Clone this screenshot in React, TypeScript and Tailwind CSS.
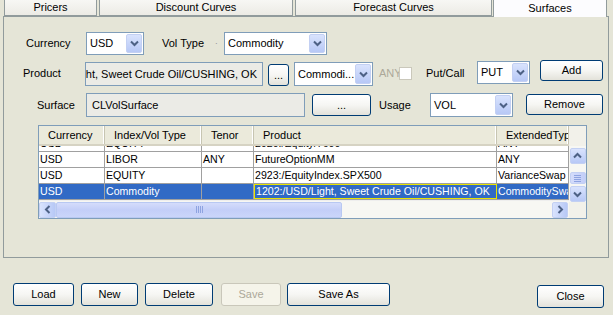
import React from "react";

const Chevron = ({ dir = "down" }: { dir?: "down" | "up" | "left" | "right" }) => {
  const rot = { down: 0, up: 180, left: 90, right: -90 }[dir];
  return (
    <svg width="9" height="7" viewBox="0 0 9 7" style={{ transform: `rotate(${rot}deg)` }}>
      <path d="M1 1.5 L4.5 5 L8 1.5" fill="none" stroke="#4d6185" strokeWidth="2" />
    </svg>
  );
};

function DropBtn() {
  return (
    <div className="w-[16px] self-stretch m-[1px] rounded-[2px] border border-[#c3d0f3] bg-gradient-to-b from-[#d9e3fd] to-[#b7c8f6] flex items-center justify-center">
      <Chevron />
    </div>
  );
}

function Combo({ className, text }: { className: string; text: string }) {
  return (
    <div className={`flex border border-[#7f9db9] bg-white shrink-0 ${className}`}>
      <div className="flex-1 flex items-center pl-[3px] whitespace-nowrap overflow-hidden">{text}</div>
      <DropBtn />
    </div>
  );
}

function XPButton({
  className,
  children,
  disabled,
}: {
  className: string;
  children: React.ReactNode;
  disabled?: boolean;
}) {
  return (
    <div
      className={`shrink-0 flex items-center justify-center rounded-[3px] border ${
        disabled
          ? "border-[#c9c7ba] text-[#aca899] bg-[#f5f4ea]"
          : "border-[#003c74] bg-gradient-to-b from-[#ffffff] via-[#f6f6f3] to-[#e3e2da]"
      } ${className}`}
    >
      {children}
    </div>
  );
}

function Tab({ className, label, active }: { className: string; label: string; active?: boolean }) {
  return (
    <div
      className={`shrink-0 flex items-center justify-center border-x border-b border-[#919b9c] ${
        active
          ? "h-[17px] bg-[#fcfcfe] border-b-0 relative z-10"
          : "h-[16px] bg-gradient-to-b from-[#f7f7f4] to-[#ecebe5]"
      } ${className}`}
    >
      {label}
    </div>
  );
}

const cols = ["w-[66px]", "w-[97px]", "w-[52px]", "w-[243px]", "w-[72px]"];
const headers = ["Currency", "Index/Vol Type", "Tenor", "Product", "ExtendedTyp"];
const rows = [
  ["USD", "EQUITY", "", "2920:/Equity/7600", "ANY"],
  ["USD", "LIBOR", "ANY", "FutureOptionMM", "ANY"],
  ["USD", "EQUITY", "", "2923:/EquityIndex.SPX500", "VarianceSwap"],
  ["USD", "Commodity", "", "1202:/USD/Light, Sweet Crude Oil/CUSHING, OK", "CommoditySwap"],
];

function Table() {
  return (
    <div className="ml-[34px] mt-[8px] w-[549px] h-[94px] border border-[#7f9db9] bg-[#f2f1ea] flex">
      <div className="w-[530px] flex flex-col">
        {/* header */}
        <div className="h-[20px] flex bg-[#ebeadb] border-b-[2px] border-[#d6d3c3]">
          {headers.map((h, i) => (
            <div
              key={h}
              className={`${cols[i]} shrink-0 flex items-center pl-[9px] whitespace-nowrap overflow-hidden border-r border-[#c7c5b2] shadow-[inset_-1px_0_0_#ffffff]`}
            >
              {h}
            </div>
          ))}
        </div>
        {/* body */}
        <div className="h-[54px] overflow-hidden bg-white text-[10.6px]">
          <div className="-mt-[10px]">
            {rows.map((r, ri) => {
              const sel = ri === 3;
              return (
                <div
                  key={ri}
                  className={`h-[16px] flex border-b border-[#a0a0a0] ${sel ? "bg-[#316ac5] text-white" : ""}`}
                >
                  {r.map((c, ci) => (
                    <div
                      key={ci}
                      className={`${cols[ci]} shrink-0 flex items-center whitespace-nowrap overflow-hidden border-r border-[#a0a0a0] ${
                        sel && ci === 3 ? "border-[1.5px] border-[#e8e400] pl-[1px]" : "pl-[1px]"
                      }`}
                    >
                      {c}
                    </div>
                  ))}
                </div>
              );
            })}
          </div>
        </div>
        {/* horizontal scrollbar */}
        <div className="h-[18px] flex items-center bg-[#f7f7f3] border-t border-[#eeeeee]">
          <div className="w-[17px] h-[16px] rounded-[2px] border border-[#c3d0f3] bg-gradient-to-r from-[#d9e3fd] to-[#b7c8f6] flex items-center justify-center">
            <Chevron dir="left" />
          </div>
          <div className="w-[286px] h-[16px] rounded-[2px] border border-[#b8c8f2] bg-gradient-to-b from-[#d4dcfb] via-[#c3cef8] to-[#cad5fa] flex items-center justify-center">
            <div className="flex gap-[1px]">
              <div className="w-[1px] h-[7px] bg-[#8ea3e0]" />
              <div className="w-[1px] h-[7px] bg-[#8ea3e0]" />
              <div className="w-[1px] h-[7px] bg-[#8ea3e0]" />
              <div className="w-[1px] h-[7px] bg-[#8ea3e0]" />
            </div>
          </div>
          <div className="flex-1" />
          <div className="w-[16px] h-[16px] mr-[1px] rounded-[2px] border border-[#c3d0f3] bg-gradient-to-r from-[#d9e3fd] to-[#b7c8f6] flex items-center justify-center">
            <Chevron dir="right" />
          </div>
        </div>
      </div>
      {/* right column */}
      <div className="w-[17px] flex flex-col">
        <div className="h-[20px]" />
        <div className="h-[56px] bg-[#f7f7f3] flex flex-col items-center pt-[2px]">
          <div className="w-[16px] h-[16px] rounded-[2px] border border-[#c3d0f3] bg-gradient-to-b from-[#d9e3fd] to-[#b7c8f6] flex items-center justify-center">
            <Chevron dir="up" />
          </div>
          <div className="w-[16px] h-[13px] mt-[8px] rounded-[2px] border border-[#c3d0f3] bg-gradient-to-r from-[#d4dcfb] to-[#c3cef8] flex flex-col items-center justify-center gap-[1px]">
            <div className="w-[7px] h-[1px] bg-[#8ea3e0]" />
            <div className="w-[7px] h-[1px] bg-[#8ea3e0]" />
            <div className="w-[7px] h-[1px] bg-[#8ea3e0]" />
            <div className="w-[7px] h-[1px] bg-[#8ea3e0]" />
          </div>
          <div className="w-[16px] h-[16px] mt-[2px] rounded-[2px] border border-[#c3d0f3] bg-gradient-to-b from-[#d9e3fd] to-[#b7c8f6] flex items-center justify-center">
            <Chevron dir="down" />
          </div>
        </div>
        <div className="flex-1" />
      </div>
    </div>
  );
}

export default function App() {
  return (
    <div className="w-[613px] h-[315px] bg-[#e5e5d7] text-[11px] text-black font-['Liberation_Sans',Arial,sans-serif] overflow-hidden leading-none">
      {/* tabs */}
      <div className="h-[16px] flex items-start pl-[4px]">
        <Tab className="w-[93px]" label="Pricers" />
        <Tab className="w-[194px] ml-[2px]" label="Discount Curves" />
        <Tab className="w-[197px] ml-[2px]" label="Forecast Curves" />
        <Tab className="w-[114px] ml-[1px]" label="Surfaces" active />
      </div>

      {/* panel */}
      <div className="ml-[3px] w-[606px] h-[242px] border border-[#919b9c] bg-[#e5e5d7]">
        {/* row 1 */}
        <div className="mt-[15px] h-[23px] flex items-center">
          <div className="ml-[22px] w-[60px] shrink-0">Currency</div>
          <Combo className="w-[58px] h-[23px]" text="USD" />
          <div className="ml-[18px] w-[53px] shrink-0">Vol Type</div>
          <div className="w-[9px] shrink-0 text-[#777] text-[8px]">·</div>
          <Combo className="w-[103px] h-[23px]" text="Commodity" />
        </div>

        {/* row 2 */}
        <div className="mt-[5px] h-[27px] flex items-start">
          <div className="ml-[19px] w-[62px] h-[27px] flex items-center shrink-0">Product</div>
          <div className="mt-[2px] w-[178px] h-[24px] shrink-0 border border-[#7f9db9] bg-[#ebebe6] flex items-center justify-end pr-[5px] overflow-hidden whitespace-nowrap">
            1202:/USD/Light, Sweet Crude Oil/CUSHING, OK
          </div>
          <XPButton className="mt-[4px] ml-[5px] w-[21px] h-[22px]">...</XPButton>
          <Combo className="mt-[2px] ml-[5px] w-[79px] h-[24px]" text="Commodi..." />
          <div className="ml-[6px] w-[20px] h-[27px] flex items-center text-[#aca899] shrink-0">ANY</div>
          <div className="mt-[7px] w-[13px] h-[13px] shrink-0 border border-[#cac8bb] bg-white" />
          <div className="ml-[14px] w-[51px] h-[27px] flex items-center shrink-0">Put/Call</div>
          <Combo className="mt-[1px] w-[53px] h-[23px]" text="PUT" />
          <XPButton className="ml-[10px] w-[63px] h-[21px]">Add</XPButton>
        </div>

        {/* row 3 */}
        <div className="mt-[6px] h-[24px] flex items-start">
          <div className="ml-[33px] w-[49px] h-[24px] flex items-center shrink-0">Surface</div>
          <div className="w-[219px] h-[24px] shrink-0 border border-[#7f9db9] bg-[#ebebe6] flex items-center pl-[5px] whitespace-nowrap overflow-hidden">
            CLVolSurface
          </div>
          <XPButton className="mt-[1px] ml-[7px] w-[59px] h-[22px]">...</XPButton>
          <div className="ml-[8px] w-[51px] h-[24px] flex items-center shrink-0">Usage</div>
          <Combo className="w-[83px] h-[24px]" text="VOL" />
          <XPButton className="mt-[1px] ml-[13px] w-[77px] h-[21px]">Remove</XPButton>
        </div>

        <Table />
      </div>

      {/* bottom buttons */}
      <div className="mt-[25px] flex items-start">
        <XPButton className="ml-[13px] w-[61px] h-[23px]">Load</XPButton>
        <XPButton className="ml-[7px] w-[57px] h-[23px]">New</XPButton>
        <XPButton className="ml-[7px] w-[68px] h-[23px]">Delete</XPButton>
        <XPButton className="ml-[8px] w-[60px] h-[23px]" disabled>
          Save
        </XPButton>
        <XPButton className="ml-[6px] w-[103px] h-[23px]">Save As</XPButton>
        <XPButton className="ml-auto mr-[9px] mt-[2px] w-[67px] h-[23px]">Close</XPButton>
      </div>
    </div>
  );
}
